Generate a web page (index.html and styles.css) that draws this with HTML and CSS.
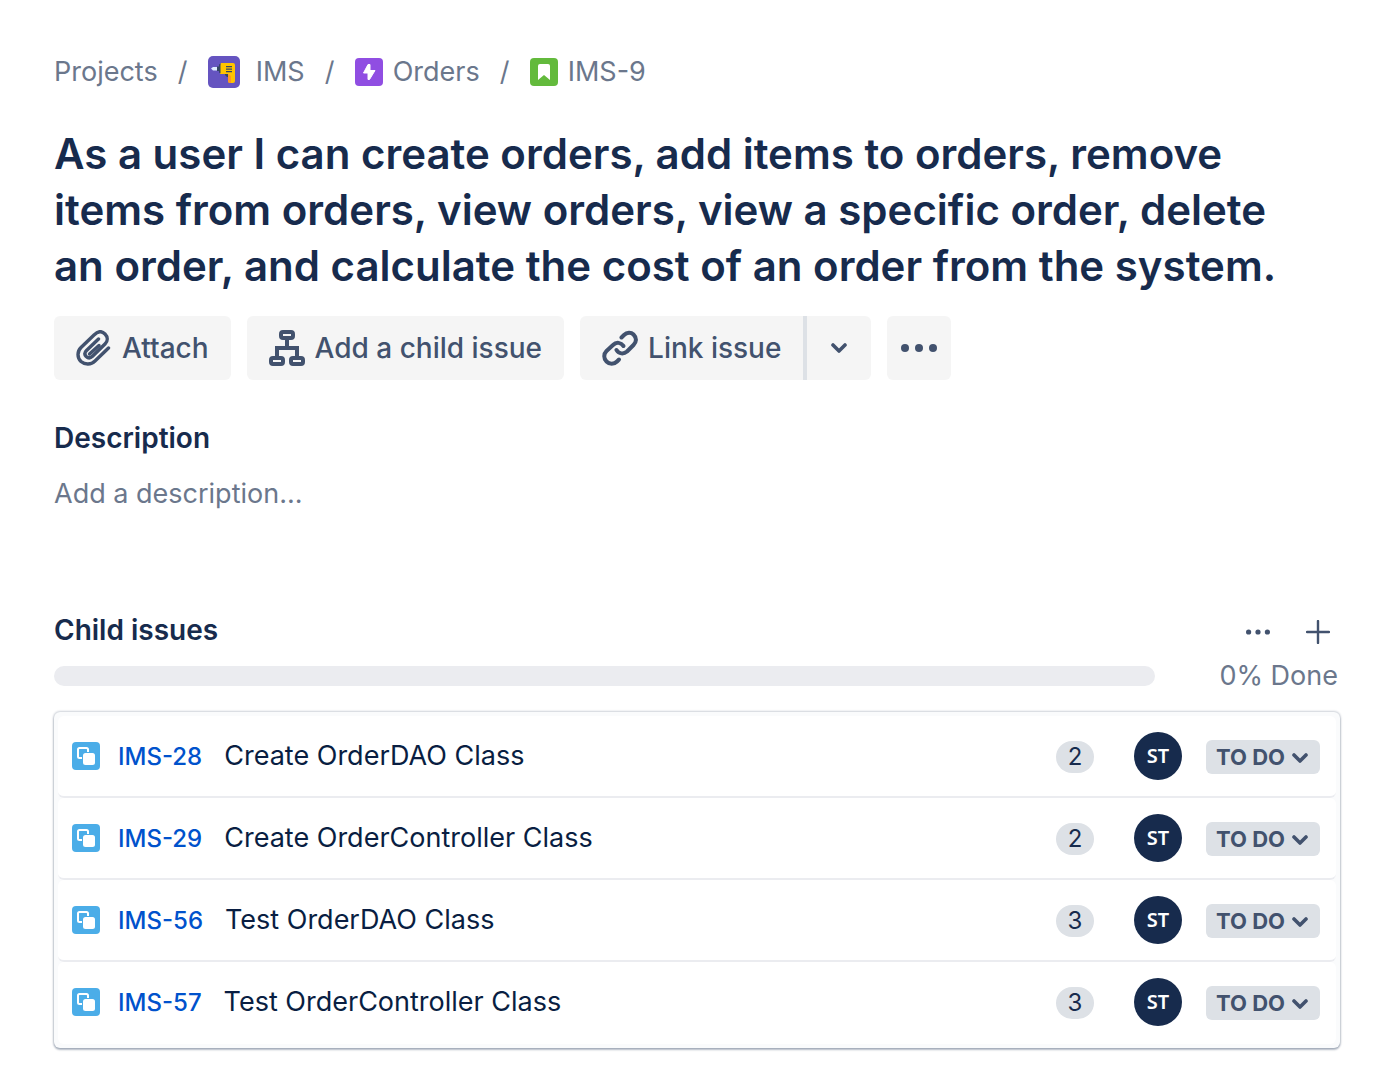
FILE: index.html
```html
<!DOCTYPE html>
<html lang="en">
<head>
<meta charset="utf-8">
<meta name="viewport" content="width=device-width, initial-scale=1">
<title>IMS-9</title>
<link rel="stylesheet" href="styles.css">
</head>
<body>
<svg class="symbols" aria-hidden="true">
  <symbol id="subtask" viewBox="0 0 28 28">
    <rect width="28" height="28" rx="4" fill="#4bade8"/>
    <rect x="6" y="6" width="10" height="10" rx="1.5" fill="none" stroke="#fff" stroke-width="2"/>
    <rect x="10" y="10" width="13" height="13" rx="3" fill="#4bade8"/>
    <rect x="11" y="11" width="12" height="12" rx="2.500" fill="#fff"/>
  </symbol>
  <symbol id="chevron" viewBox="0 0 16 12">
    <path d="M2 3l6 6 6-6" fill="none" stroke="currentColor" stroke-width="3.600" stroke-linecap="round" stroke-linejoin="round"/>
  </symbol>
</svg>
<main class="issue">
  <nav aria-label="Breadcrumb">
    <ol class="crumbs">
      <li><a href="#">Projects</a></li>
      <li><a class="project" href="#">
        <svg width="32" height="32" viewBox="0 0 32 32" aria-hidden="true">
          <rect width="32" height="32" rx="5" fill="#6554c0"/>
          <path d="M3 12.500l2-1.500h4v3.500H5z" fill="#deebff"/>
          <path d="M9 10.500h4v4.500H9z" fill="#344563"/>
          <path d="M13 7h12q2 0 2 2v16q0 2-2 2h-3q-2 0-2-2v-7h-8V9z" fill="#ffc400"/>
          <path d="M20 18l3 2v7h-1q-2 0-2-2z" fill="#ff991f"/>
          <path d="M11 8.500l1.500-1v10l-1.500-1zM17 18h3v3h-1l-2-2zM18 10h6v1.300h-6zM18 12.500h6v1.300h-6zM18 15h6v1.300h-6z" fill="#344563"/>
        </svg>IMS</a></li>
      <li><a href="#">
        <svg width="28" height="28" viewBox="0 0 28 28" aria-hidden="true">
          <rect width="28" height="28" rx="4" fill="#904ee2"/>
          <path d="M13 6.500L8.500 15H13v6.500h1.500L20 12.500h-5V6.500z" fill="#fff" stroke="#fff" stroke-linejoin="round"/>
        </svg>Orders</a></li>
      <li><a href="#">
        <svg width="28" height="28" viewBox="0 0 28 28" aria-hidden="true">
          <rect width="28" height="28" rx="4" fill="#63ba3c"/>
          <path d="M10 6h8q2 0 2 2v14l-6-5-6 5V8q0-2 2-2z" fill="#fff"/>
        </svg>IMS-9</a></li>
    </ol>
  </nav>

  <h1>As a user I can create orders, add items to orders, remove items from orders, view orders, view a specific order, delete an order, and calculate the cost of an order from the system.</h1>

  <div class="actions">
    <button type="button" class="btn">
      <svg width="36" height="36" viewBox="0 0 36 36" fill="none" stroke="currentColor" stroke-width="3.400" stroke-linecap="round" stroke-linejoin="round" aria-hidden="true"><path d="M32.500 18L19 31C15 35 9 35 5 31.500C1 27.500 1 21.500 5 17.500L18 5C22 1 26 1 29 4C32 7 32 11 29 14L16.500 26.300C14.500 28.200 12 28.200 10.200 26.500C8.500 24.800 8.500 22.500 10.500 20.500L22.500 9"/><path d="M23 15.500L13.500 24"/></svg>
      Attach</button>
    <button type="button" class="btn">
      <svg width="36" height="36" viewBox="0 0 36 36" fill="none" stroke="currentColor" stroke-width="4" aria-hidden="true"><rect x="12" y="2" width="12" height="6" rx="2"/><rect x="2" y="28" width="12" height="6" rx="2"/><rect x="22" y="28" width="12" height="6" rx="2"/><path d="M18 9v9M8 27v-9h20v9"/></svg>
      Add a child issue</button>
    <div class="split">
      <button type="button" class="btn">
        <svg width="36" height="36" viewBox="0 0 36 36" fill="none" stroke="currentColor" stroke-width="4" stroke-linecap="round" stroke-linejoin="round" aria-hidden="true"><path d="M19.500 7.500L22 5C25 2 29 2 31.500 4.500C35 8 34.500 12 31.500 15L25 21.500C21.500 24.500 17 24 14.500 20"/><path d="M17 29.500L15 31.500C12 34.500 7.500 34.500 4.500 31.500C1.500 28.500 1.500 24 4.500 21L11 15C14.500 11.500 19 12.500 21.500 16"/></svg>
        Link issue</button>
      <button type="button" class="btn square" aria-label="More link options"><svg width="16" height="12" aria-hidden="true"><use href="#chevron"/></svg></button>
    </div>
    <button type="button" class="btn square" aria-label="Actions">
      <svg width="36" height="8" viewBox="0 0 36 8" fill="currentColor" aria-hidden="true"><circle cx="4" cy="4" r="4"/><circle cx="18" cy="4" r="4"/><circle cx="32" cy="4" r="4"/></svg>
    </button>
  </div>

  <section class="description">
    <h2>Description</h2>
    <p>Add a description...</p>
  </section>

  <section>
    <header class="children-head">
      <h2>Child issues</h2>
      <div class="tools">
        <button type="button" aria-label="More"><svg width="24" height="6" viewBox="0 0 24 6" fill="currentColor" aria-hidden="true"><circle cx="2.600" cy="3" r="2.600"/><circle cx="12" cy="3" r="2.600"/><circle cx="21.400" cy="3" r="2.600"/></svg></button>
        <button type="button" aria-label="Create child issue"><svg width="24" height="24" viewBox="0 0 24 24" fill="none" stroke="currentColor" stroke-width="2.400" stroke-linecap="round" aria-hidden="true"><path d="M12 1v22M1 12h22"/></svg></button>
      </div>
    </header>
    <div class="progress">
      <div class="track" role="progressbar" aria-label="Done" aria-valuenow="0" aria-valuemin="0" aria-valuemax="100"></div>
      <span>0% Done</span>
    </div>
    <ul class="children">
      <li>
        <svg width="28" height="28" aria-hidden="true"><use href="#subtask"/></svg>
        <a class="key" href="#">IMS-28</a><span class="summary">Create OrderDAO Class</span>
        <span class="points">2</span><span class="avatar">ST</span>
        <label class="status"><select aria-label="Status of IMS-28"><option>TO DO</option></select><svg width="16" height="12" aria-hidden="true"><use href="#chevron"/></svg></label>
      </li>
      <li>
        <svg width="28" height="28" aria-hidden="true"><use href="#subtask"/></svg>
        <a class="key" href="#">IMS-29</a><span class="summary">Create OrderController Class</span>
        <span class="points">2</span><span class="avatar">ST</span>
        <label class="status"><select aria-label="Status of IMS-29"><option>TO DO</option></select><svg width="16" height="12" aria-hidden="true"><use href="#chevron"/></svg></label>
      </li>
      <li>
        <svg width="28" height="28" aria-hidden="true"><use href="#subtask"/></svg>
        <a class="key" href="#">IMS-56</a><span class="summary">Test OrderDAO Class</span>
        <span class="points">3</span><span class="avatar">ST</span>
        <label class="status"><select aria-label="Status of IMS-56"><option>TO DO</option></select><svg width="16" height="12" aria-hidden="true"><use href="#chevron"/></svg></label>
      </li>
      <li>
        <svg width="28" height="28" aria-hidden="true"><use href="#subtask"/></svg>
        <a class="key" href="#">IMS-57</a><span class="summary">Test OrderController Class</span>
        <span class="points">3</span><span class="avatar">ST</span>
        <label class="status"><select aria-label="Status of IMS-57"><option>TO DO</option></select><svg width="16" height="12" aria-hidden="true"><use href="#chevron"/></svg></label>
      </li>
    </ul>
  </section>
</main>
</body>
</html>
```
FILE: styles.css
```css
* { box-sizing: border-box; }
body {
  margin: 0;
  background: #fff;
  color: #172b4d;
  font: 400 27px/40px Inter, "Liberation Sans", sans-serif;
}
h1, h2, p, ol, ul { margin: 0; padding: 0; }
ol, ul { list-style: none; }
a { text-decoration: none; }
button, select { font: inherit; border: 0; cursor: pointer; }
svg { flex: none; }
.symbols { position: absolute; width: 0; height: 0; }
.issue { padding: 52px 52px 40px 54px; }

.crumbs { display: flex; flex-wrap: wrap; color: #6b778c; }
.crumbs li { display: flex; }
.crumbs li + li::before { content: "/"; width: 50px; text-align: center; }
.crumbs a { display: flex; align-items: center; gap: 10px; color: inherit; }
.crumbs .project { gap: 16px; }

h1 {
  margin-top: 34px;
  padding-right: 48px;
  font-size: 42px;
  font-weight: 600;
  line-height: 56px;
}
h2 { font-size: 28px; font-weight: 600; line-height: 40px; }

.actions { display: flex; flex-wrap: wrap; gap: 16px; margin-top: 22px; }
.btn {
  display: flex;
  align-items: center;
  justify-content: center;
  gap: 10px;
  height: 64px;
  padding: 0 22px;
  border-radius: 6px;
  background: #f5f5f5;
  color: #42526e;
  font-size: 28px;
  font-weight: 500;
}
.square { width: 64px; padding: 0; }
.split { display: flex; }
.split .btn:first-child { border-radius: 6px 0 0 6px; border-right: 4px solid #dde1e6; }
.split .btn:last-child { border-radius: 0 6px 6px 0; }

.description { margin: 38px 0 96px; }
.description p { margin-top: 16px; color: #6b778c; }

.children-head { display: flex; align-items: flex-start; justify-content: space-between; }
.tools { display: flex; gap: 20px; padding: 2px 2px 0 0; }
.tools button {
  display: flex;
  align-items: center;
  justify-content: center;
  width: 40px;
  height: 40px;
  padding: 0;
  background: none;
  color: #42526e;
}
.progress { display: flex; align-items: center; gap: 64px; margin-top: 4px; padding-right: 2px; color: #6b778c; }
.track { flex: 1; height: 20px; border-radius: 10px; background: #ebecf0; }

.children {
  margin-top: 16px;
  padding: 4px;
  border-radius: 6px;
  background: #fafbfc;
  box-shadow: 0 2px 2px rgba(9, 30, 66, .25), 0 0 2px 1px rgba(9, 30, 66, .2);
}
.children li {
  display: flex;
  align-items: baseline;
  height: 82px;
  padding: 0 16px 0 14px;
  border-radius: 6px;
  border-bottom: 2px solid #ebecf0;
  background: #fff;
}
.children li:last-child { border-bottom-color: transparent; }
.children li > svg, .avatar { align-self: center; }
.key { margin-left: 18px; color: #0052cc; font-size: 24px; font-weight: 500; }
.summary { flex: 1; min-width: 0; margin-left: 22px; color: #091e42; line-height: 80px; }
.points {
  min-width: 38px;
  padding: 0 11px;
  border-radius: 16px;
  background: #dde1e6;
  font-size: 24px;
  line-height: 32px;
  text-align: center;
}
.avatar {
  width: 48px;
  margin: 0 24px 0 40px;
  border-radius: 50%;
  background: #172b4d;
  color: #fff;
  font: 600 20px/48px "Noto Sans", sans-serif;
  text-align: center;
}
.status { position: relative; color: #42526e; }
.status select {
  display: block;
  appearance: none;
  width: 114px;
  height: 34px;
  padding: 0 10px;
  border-radius: 6px;
  background: #dde1e6;
  color: inherit;
  font-size: 22px;
  font-weight: 700;
  line-height: 34px;
}
.status svg { position: absolute; right: 12px; top: 12px; pointer-events: none; }
```
